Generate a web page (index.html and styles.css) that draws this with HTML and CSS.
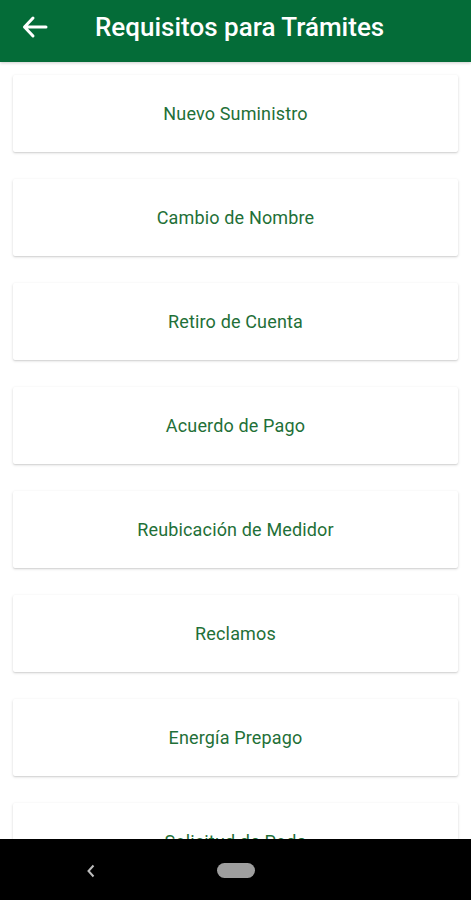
FILE: index.html
```html
<!DOCTYPE html>
<html lang="es">
<head>
<meta charset="utf-8">
<title>Requisitos para Trámites</title>
<link rel="stylesheet" href="styles.css">
</head>
<body>
<div class="screen">
  <header class="appbar">
    <button class="back" aria-label="Atrás">
      <svg width="26" height="24" viewBox="0 0 26 24"><path d="M2.5 12 H24 M11 3 L2.5 12 L11 21" fill="none" stroke="#fff" stroke-width="3" stroke-linecap="round" stroke-linejoin="round"/></svg>
    </button>
    <h1 class="title">Requisitos para Trámites</h1>
  </header>
  <main class="list">
    <div class="card">Nuevo Suministro</div>
    <div class="card">Cambio de Nombre</div>
    <div class="card">Retiro de Cuenta</div>
    <div class="card">Acuerdo de Pago</div>
    <div class="card">Reubicación de Medidor</div>
    <div class="card">Reclamos</div>
    <div class="card">Energía Prepago</div>
    <div class="card">Solicitud de Poda</div>
  </main>
  <nav class="navbar">
    <svg class="nav-back" width="10" height="14" viewBox="0 0 10 14"><path d="M7.5 1.5 L2.5 7 L7.5 12.5" fill="none" stroke="#bdbdbd" stroke-width="2"/></svg>
    <span class="pill"></span>
  </nav>
</div>
</body>
</html>
```
FILE: styles.css
```css
* { box-sizing: border-box; }
html, body { margin: 0; padding: 0; height: 100%; }
body {
  font-family: Roboto, "Noto Sans", "Liberation Sans", sans-serif;
  background: #fff;
  overflow: hidden;
}
.screen {
  height: 900px;
  display: flex;
  flex-direction: column;
}
.appbar {
  height: 62px;
  flex: none;
  background: #046c38;
  display: flex;
  align-items: center;
  padding-left: 22px;
  padding-bottom: 9px;
  box-shadow: 0 1px 3px rgba(0,0,0,0.2);
  position: relative;
  z-index: 1;
}
.back {
  background: none;
  border: 0;
  padding: 0;
  width: 26px;
  height: 24px;
  display: flex;
}
.title {
  margin: 0 0 0 47px;
  color: #fff;
  font-size: 26px;
  font-weight: 500;
  letter-spacing: 0;
}
.list {
  flex: 1;
  overflow: hidden;
  padding: 13px 13px 0;
  display: flex;
  flex-direction: column;
  gap: 27px;
}
.card {
  flex: none;
  height: 77px;
  background: #fff;
  border-radius: 2px;
  box-shadow: 0 1px 3px rgba(0,0,0,0.16), 0 1px 1px rgba(0,0,0,0.06);
  display: flex;
  align-items: center;
  justify-content: center;
  color: #1f7038;
  font-size: 18px;
  letter-spacing: 0.15px;
}
.navbar {
  height: 61px;
  flex: none;
  background: #000;
  display: flex;
  align-items: center;
  padding-left: 86px;
  padding-top: 2px;
}
.nav-back { flex: none; }
.pill {
  width: 38px;
  height: 15px;
  border-radius: 8px;
  background: #9e9e9e;
  margin-left: 121px;
}
```
